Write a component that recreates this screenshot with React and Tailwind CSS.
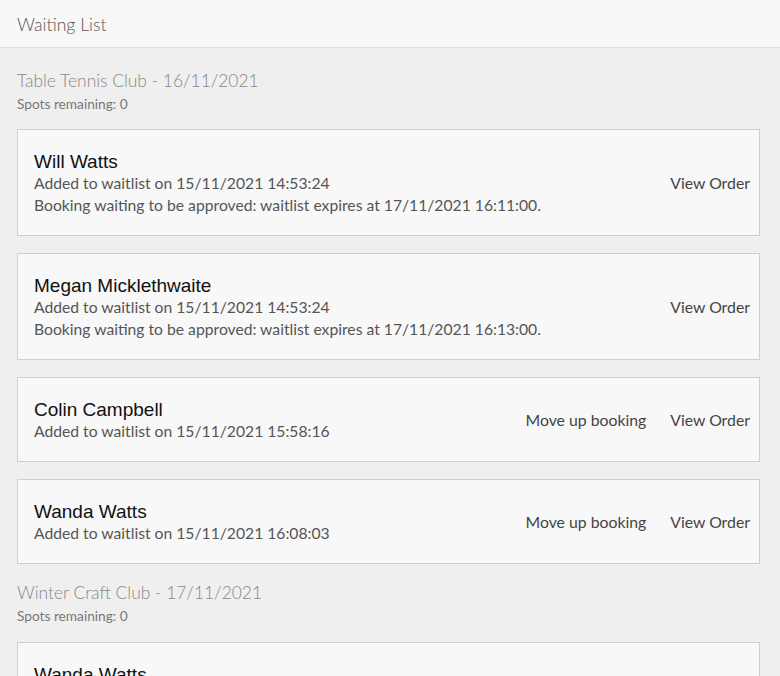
import React from "react";

const sections = [
  {
    title: "Table Tennis Club - 16/11/2021",
    spots: "Spots remaining: 0",
    items: [
      {
        name: "Will Watts",
        lines: [
          "Added to waitlist on 15/11/2021 14:53:24",
          "Booking waiting to be approved: waitlist expires at 17/11/2021 16:11:00.",
        ],
        move: false,
      },
      {
        name: "Megan Micklethwaite",
        lines: [
          "Added to waitlist on 15/11/2021 14:53:24",
          "Booking waiting to be approved: waitlist expires at 17/11/2021 16:13:00.",
        ],
        move: false,
      },
      {
        name: "Colin Campbell",
        lines: ["Added to waitlist on 15/11/2021 15:58:16"],
        move: true,
      },
      {
        name: "Wanda Watts",
        lines: ["Added to waitlist on 15/11/2021 16:08:03"],
        move: true,
      },
    ],
  },
  {
    title: "Winter Craft Club - 17/11/2021",
    spots: "Spots remaining: 0",
    items: [
      {
        name: "Wanda Watts",
        lines: ["Added to waitlist on 15/11/2021 16:08:03"],
        move: true,
      },
    ],
  },
];

function Card({ item }) {
  return (
    <div className="flex items-center border border-[#cfcfcf] bg-[#f8f8f8] pl-[16px] pr-[9px] pt-[20px] pb-[19px]">
      <div className="flex-1 min-w-0">
        <div className="text-[19px] leading-[22px] pt-[1px] -mb-[1px] text-[#111] font-['Liberation_Sans',Arial,sans-serif]">
          {item.name}
        </div>
        {item.lines.map((l, i) => (
          <div key={i} className="text-[15.7px] leading-[22px] text-[#555]">
            {l}
          </div>
        ))}
      </div>
      <div className="flex items-center gap-[24px] text-[15.8px] text-[#444]">
        {item.move && <span>Move up booking</span>}
        <span>View Order</span>
      </div>
    </div>
  );
}

export default function App() {
  return (
    <div className="min-h-[676px] bg-[#efefef] font-['Lato','Open_Sans',sans-serif]">
      <div className="h-[48px] bg-[#f8f8f8] border-b border-[#dcdcdc] flex items-center px-[17px] pt-[3px]">
        <span className="text-[17.6px] font-light text-[#555]">Waiting List</span>
      </div>
      <div className="px-[17px] pr-[20px]">
        {sections.map((s, si) => (
          <div key={si}>
            <div className={si === 0 ? "pt-[19px] pb-[16px]" : "pt-[15px] pb-[17px]"}>
              <div className="text-[17.4px] leading-[26px] pt-[1px] -mb-[1px] font-light text-[#888]">
                {s.title}
              </div>
              <div className="text-[13.7px] leading-[18px] mt-[2px] text-[#777]">
                {s.spots}
              </div>
            </div>
            <div className="flex flex-col gap-[17px]">
              {s.items.map((it, i) => (
                <Card key={i} item={it} />
              ))}
            </div>
          </div>
        ))}
      </div>
    </div>
  );
}
